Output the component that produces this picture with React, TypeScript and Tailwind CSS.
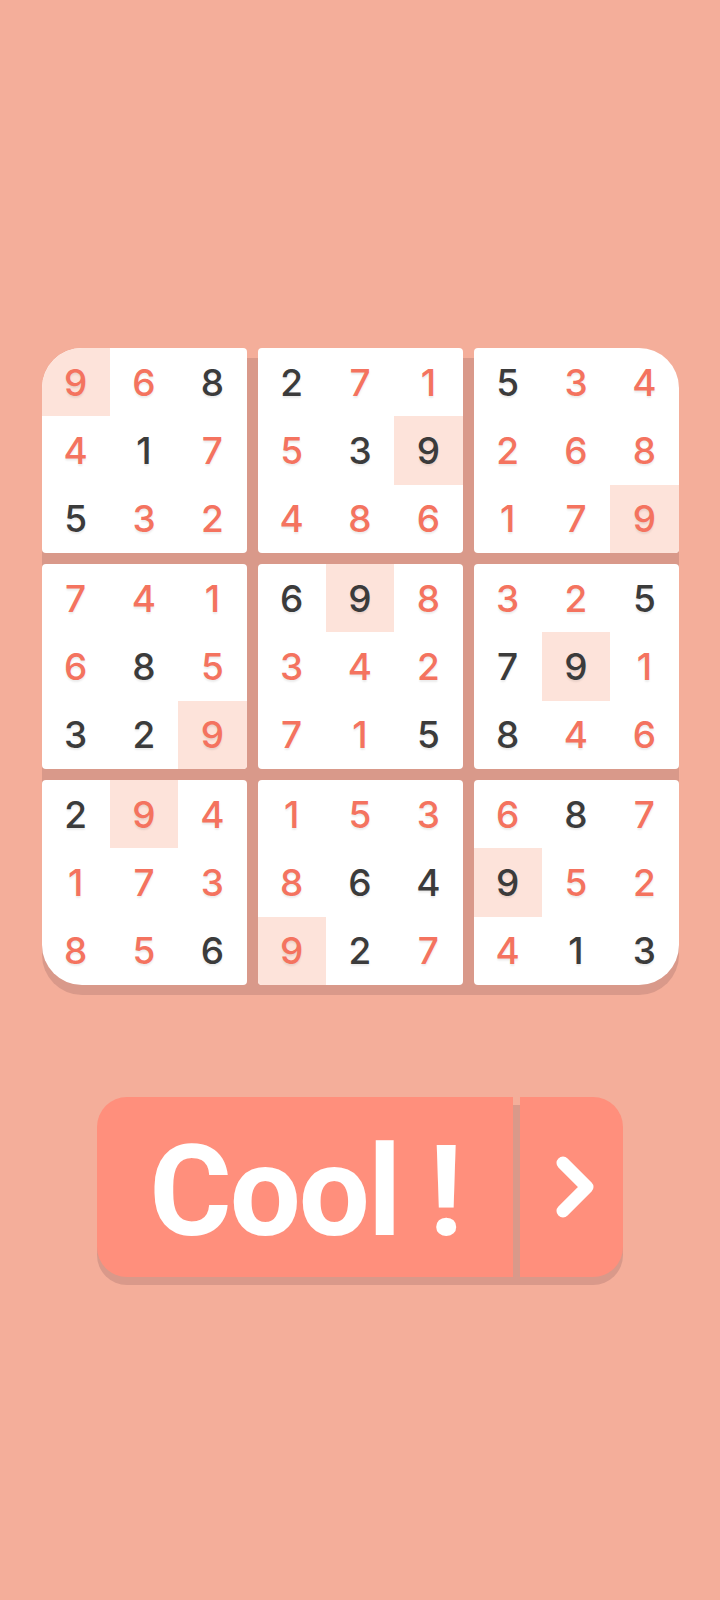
import React from "react";

type Cell = [number, "r" | "d", boolean?];

const boxes: Cell[][] = [
  [[9,"r",true],[6,"r"],[8,"d"],[4,"r"],[1,"d"],[7,"r"],[5,"d"],[3,"r"],[2,"r"]],
  [[2,"d"],[7,"r"],[1,"r"],[5,"r"],[3,"d"],[9,"d",true],[4,"r"],[8,"r"],[6,"r"]],
  [[5,"d"],[3,"r"],[4,"r"],[2,"r"],[6,"r"],[8,"r"],[1,"r"],[7,"r"],[9,"r",true]],
  [[7,"r"],[4,"r"],[1,"r"],[6,"r"],[8,"d"],[5,"r"],[3,"d"],[2,"d"],[9,"r",true]],
  [[6,"d"],[9,"d",true],[8,"r"],[3,"r"],[4,"r"],[2,"r"],[7,"r"],[1,"r"],[5,"d"]],
  [[3,"r"],[2,"r"],[5,"d"],[7,"d"],[9,"d",true],[1,"r"],[8,"d"],[4,"r"],[6,"r"]],
  [[2,"d"],[9,"r",true],[4,"r"],[1,"r"],[7,"r"],[3,"r"],[8,"r"],[5,"r"],[6,"d"]],
  [[1,"r"],[5,"r"],[3,"r"],[8,"r"],[6,"d"],[4,"d"],[9,"r",true],[2,"d"],[7,"r"]],
  [[6,"r"],[8,"d"],[7,"r"],[9,"d",true],[5,"r"],[2,"r"],[4,"r"],[1,"d"],[3,"d"]],
];

const corner = [
  "rounded-[4px] rounded-tl-[40px]",
  "rounded-[4px]",
  "rounded-[4px] rounded-tr-[40px]",
  "rounded-[4px]",
  "rounded-[4px]",
  "rounded-[4px]",
  "rounded-[4px] rounded-bl-[40px]",
  "rounded-[4px]",
  "rounded-[4px] rounded-br-[40px]",
];

export default function App() {
  return (
    <div className="w-[720px] h-[1600px] bg-[#f4ae9a] flex flex-col items-center pt-[348px]" style={{ fontFamily: "Inter, 'Noto Sans', sans-serif" }}>
      <div className="relative w-[637px] h-[637px]">
        <div className="absolute left-0 right-0 top-[10px] h-[637px] rounded-[40px] bg-[#d9998a]" />
        <div className="relative grid grid-cols-3 gap-[11px]">
          {boxes.map((box, bi) => (
            <div key={bi} className={`w-[205px] h-[205px] bg-white overflow-hidden grid grid-cols-3 grid-rows-3 ${corner[bi]}`}>
              {box.map(([n, c, hl], ci) => (
                <div
                  key={ci}
                  className={`flex items-center justify-center text-[37px] font-medium leading-none [text-shadow:0_2px_2px_rgba(0,0,0,0.08)] ${hl ? "bg-[#fde3da]" : ""} ${c === "r" ? "text-[#f4735f]" : "text-[#3b3b3b]"}`}
                >
                  {n}
                </div>
              ))}
            </div>
          ))}
        </div>
      </div>

      <div className="relative mt-[112px] w-[526px] h-[180px]">
        <div className="absolute left-0 right-0 top-[8px] h-[180px] rounded-[30px] bg-[#d9998a]" />
        <div className="relative flex h-[180px] gap-[7px]">
          <div className="w-[416px] h-full bg-[#ff8f7c] rounded-l-[30px] flex items-center justify-center pt-[10px]">
            <span className="text-white font-bold text-[126px] leading-none tracking-[-2px]" style={{ fontFamily: "Roboto, sans-serif" }}>
              Cool !
            </span>
          </div>
          <div className="flex-1 h-full bg-[#ff8f7c] rounded-r-[30px] flex items-center justify-center">
            <svg width="44" height="66" viewBox="0 0 44 66" className="ml-[8px]">
              <path d="M9 9 L33 33 L9 57" fill="none" stroke="white" strokeWidth="13" strokeLinecap="round" strokeLinejoin="round" />
            </svg>
          </div>
        </div>
      </div>
    </div>
  );
}
